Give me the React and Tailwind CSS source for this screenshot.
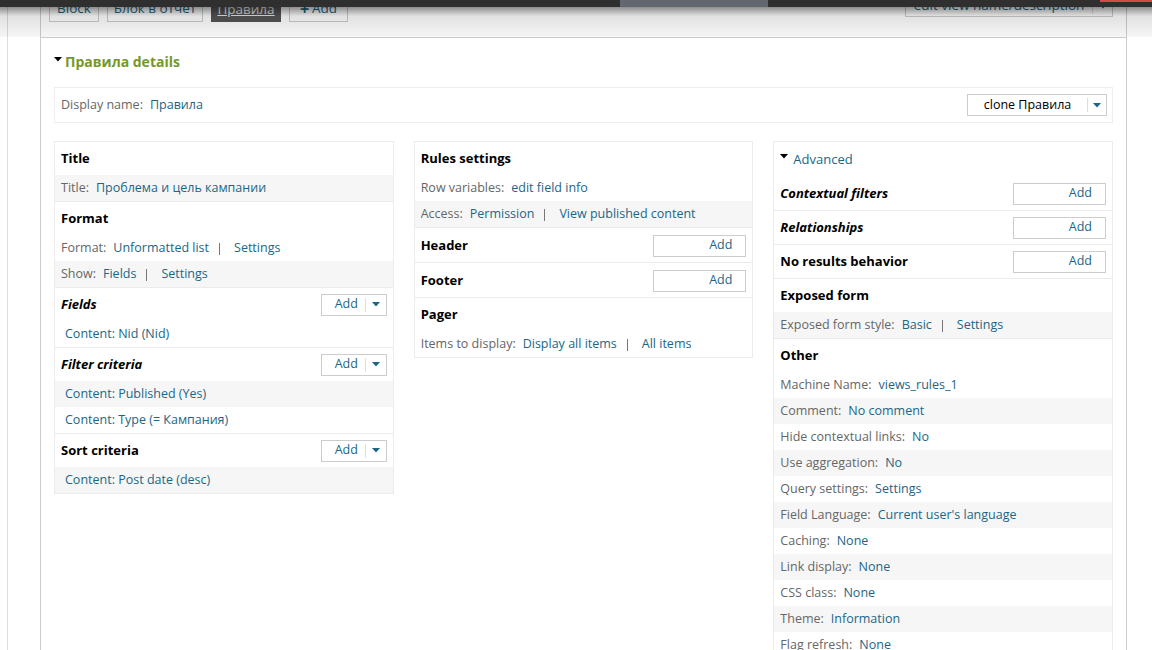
import React from "react";

const LINK = "text-[#1b6686]";
const LABEL = "text-[#666]";

function Tri({ className = "" }) {
  return (
    <svg width="8" height="5" viewBox="0 0 8 5" className={className}>
      <polygon points="0,0 8,0 4,4.5" fill="currentColor" />
    </svg>
  );
}

function AddDrop() {
  return (
    <div className="flex items-center h-[22px] w-[66px] border border-[#ccc] bg-white text-[12.5px]">
      <span className={`pl-[13px] w-[43px] ${LINK}`}>Add</span>
      <span className="h-[14px] border-l border-[#ddd]" />
      <span className={`flex-1 flex justify-center ${LINK}`}>
        <Tri />
      </span>
    </div>
  );
}

function AddSingle() {
  return (
    <div className={`h-[22px] w-[93px] border border-[#ccc] bg-white text-[12.5px] flex items-center justify-end pr-[13px] ${LINK}`}>
      Add
    </div>
  );
}

function Header({ title, italic, add }) {
  return (
    <div className="h-[33px] flex items-center justify-between pl-[6px] pr-[6px]">
      <span className={`font-bold text-[13px] text-black ${italic ? "italic" : ""}`}>{title}</span>
      {add === "drop" && <AddDrop />}
      {add === "single" && <AddSingle />}
    </div>
  );
}

function Row({ label, gray, indent, children }) {
  return (
    <div className={`h-[26px] flex items-center text-[12.5px] whitespace-nowrap ${indent ? "pl-[10px]" : "pl-[6px]"} ${gray ? "bg-[#f6f6f6]" : "bg-white"}`}>
      {label && <span className={`${LABEL} mr-[7px]`}>{label}</span>}
      {children}
    </div>
  );
}

function Sep() {
  return <span className="ml-[10px] mr-[14px] inline-block w-[1px] h-[12px] mt-[2px] bg-[#777]" />;
}

function Section({ children, first }) {
  return <div className={first ? "" : "border-t border-[#ececec]"}>{children}</div>;
}

export default function App() {
  const other = [
    ["Machine Name:", "views_rules_1"],
    ["Comment:", "No comment"],
    ["Hide contextual links:", "No"],
    ["Use aggregation:", "No"],
    ["Query settings:", "Settings"],
    ["Field Language:", "Current user's language"],
    ["Caching:", "None"],
    ["Link display:", "None"],
    ["CSS class:", "None"],
    ["Theme:", "Information"],
    ["Flag refresh:", "None"],
    ["Exposed form in block:", "No"],
  ];
  return (
    <div
      className="w-[1152px] h-[650px] overflow-hidden relative bg-white"
      style={{ fontFamily: '"Open Sans", "Noto Sans", sans-serif' }}
    >
      <div className="flex h-full">
        <div className="w-[7px] flex-none" />
        <div className="border-l border-[#ddd] pl-[32px] flex-none h-full">
          <div className="w-[1087px] border-x border-[#ccc] h-full">
            {/* tabs row */}
            <div className="h-[38px] border-b border-[#ccc] flex justify-between items-start pl-[8px] pr-[13px]">
              <div className="flex items-end gap-[8px] h-[22px] overflow-hidden text-[13.5px]">
                <div className={`h-[30px] w-[50px] border border-[#ccc] flex items-end justify-center pb-[3px] ${LINK}`}>Block</div>
                <div className={`h-[30px] w-[96px] border border-[#ccc] flex items-end justify-center pb-[3px] ${LINK}`}>Блок в отчет</div>
                <div className="h-[30px] w-[70px] bg-[#555] flex items-end justify-center pb-[3px] text-[#e8e8e8] underline">Правила</div>
                <div className={`h-[30px] w-[59px] border border-[#ccc] flex items-end justify-center pb-[3px] gap-[3px] ${LINK}`}>
                  <span className="font-bold text-[16px] leading-[18px]">+</span>Add
                </div>
              </div>
              <div className="flex items-end h-[17px] overflow-hidden">
                <div className={`h-[28px] w-[208px] border border-[#ccc] flex items-end pb-[1px] text-[13.5px] ${LINK}`}>
                  <span className="w-[186px] text-center">edit view name/description</span>
                  <span className="h-[14px] border-l border-[#ddd] mb-[1px]" />
                  <span className="flex-1 flex justify-center pb-[6px]"><Tri /></span>
                </div>
              </div>
            </div>

            {/* content */}
            <div className="px-[13px]">
              <div className="pt-[14px] flex items-start h-[34px]">
                <Tri className="mt-[5px] text-black" />
                <span className="ml-[3px] text-[14px] leading-[20px] font-bold text-[#76982a]">Правила details</span>
              </div>

              <div className="mt-[15px] h-[36px] border border-[#eee] flex items-center justify-between pl-[6px] pr-[5px] text-[12.5px]">
                <div>
                  <span className={`${LABEL} mr-[7px]`}>Display name:</span>
                  <span className={LINK}>Правила</span>
                </div>
                <div className="flex items-center h-[22px] w-[140px] border border-[#ccc] bg-white">
                  <span className="w-[119px] text-center text-black">clone Правила</span>
                  <span className="h-[14px] border-l border-[#ddd]" />
                  <span className={`flex-1 flex justify-center ${LINK}`}><Tri /></span>
                </div>
              </div>

              <div className="mt-[18px] grid grid-cols-3 gap-[20px] items-start">
                {/* col 1 */}
                <div className="border border-[#ececec]">
                  <Section first>
                    <Header title="Title" />
                    <Row label="Title:" gray><span className={LINK}>Проблема и цель кампании</span></Row>
                  </Section>
                  <Section>
                    <Header title="Format" />
                    <Row label="Format:"><span className={LINK}>Unformatted list</span><Sep /><span className={LINK}>Settings</span></Row>
                    <Row label="Show:" gray><span className={LINK}>Fields</span><Sep /><span className={LINK}>Settings</span></Row>
                  </Section>
                  <Section>
                    <Header title="Fields" italic add="drop" />
                    <Row indent><span className={LINK}>Content: Nid (Nid)</span></Row>
                  </Section>
                  <Section>
                    <Header title="Filter criteria" italic add="drop" />
                    <Row indent gray><span className={LINK}>Content: Published (Yes)</span></Row>
                    <Row indent><span className={LINK}>Content: Type (= Кампания)</span></Row>
                  </Section>
                  <Section>
                    <Header title="Sort criteria" add="drop" />
                    <Row indent gray><span className={LINK}>Content: Post date (desc)</span></Row>
                  </Section>
                </div>

                {/* col 2 */}
                <div className="border border-[#ececec]">
                  <Section first>
                    <Header title="Rules settings" />
                    <Row label="Row variables:"><span className={LINK}>edit field info</span></Row>
                    <Row label="Access:" gray><span className={LINK}>Permission</span><Sep /><span className={LINK}>View published content</span></Row>
                  </Section>
                  <Section>
                    <div className="pt-[1px]"><Header title="Header" add="single" /></div>
                  </Section>
                  <Section>
                    <div className="pt-[1px]"><Header title="Footer" add="single" /></div>
                  </Section>
                  <Section>
                    <Header title="Pager" />
                    <Row label="Items to display:"><span className={LINK}>Display all items</span><Sep /><span className={LINK}>All items</span></Row>
                  </Section>
                </div>

                {/* col 3 */}
                <div className="border border-[#ececec]">
                  <Section first>
                    <div className="h-[35px] flex items-start pl-[6px] pt-[8px]">
                      <Tri className="mt-[4px] text-black" />
                      <span className={`ml-[5px] text-[13px] leading-[18px] ${LINK}`}>Advanced</span>
                    </div>
                    <Header title="Contextual filters" italic add="single" />
                  </Section>
                  <Section>
                    <Header title="Relationships" italic add="single" />
                  </Section>
                  <Section>
                    <Header title="No results behavior" add="single" />
                  </Section>
                  <Section>
                    <Header title="Exposed form" />
                    <Row label="Exposed form style:" gray><span className={LINK}>Basic</span><Sep /><span className={LINK}>Settings</span></Row>
                  </Section>
                  <Section>
                    <Header title="Other" />
                    {other.map(([l, v], i) => (
                      <Row key={l} label={l} gray={i % 2 === 1}><span className={LINK}>{v}</span></Row>
                    ))}
                  </Section>
                </div>
              </div>
            </div>
          </div>
        </div>
      </div>

      {/* toolbar overlay */}
      <div className="absolute top-0 left-0 w-full h-[7px] bg-[#2f2f2f]">
        <div className="absolute top-0 left-[620px] w-[148px] h-[7px] bg-[#63676f]" />
        <div className="absolute top-0 left-[1100px] w-[52px] h-[2px] bg-[#d24b4b]" />
      </div>
      <div className="absolute top-[7px] left-0 w-full h-[30px] pointer-events-none bg-[linear-gradient(to_bottom,rgba(0,0,0,0.45),rgba(0,0,0,0.12)_30%,rgba(0,0,0,0.04))]" />
    </div>
  );
}
